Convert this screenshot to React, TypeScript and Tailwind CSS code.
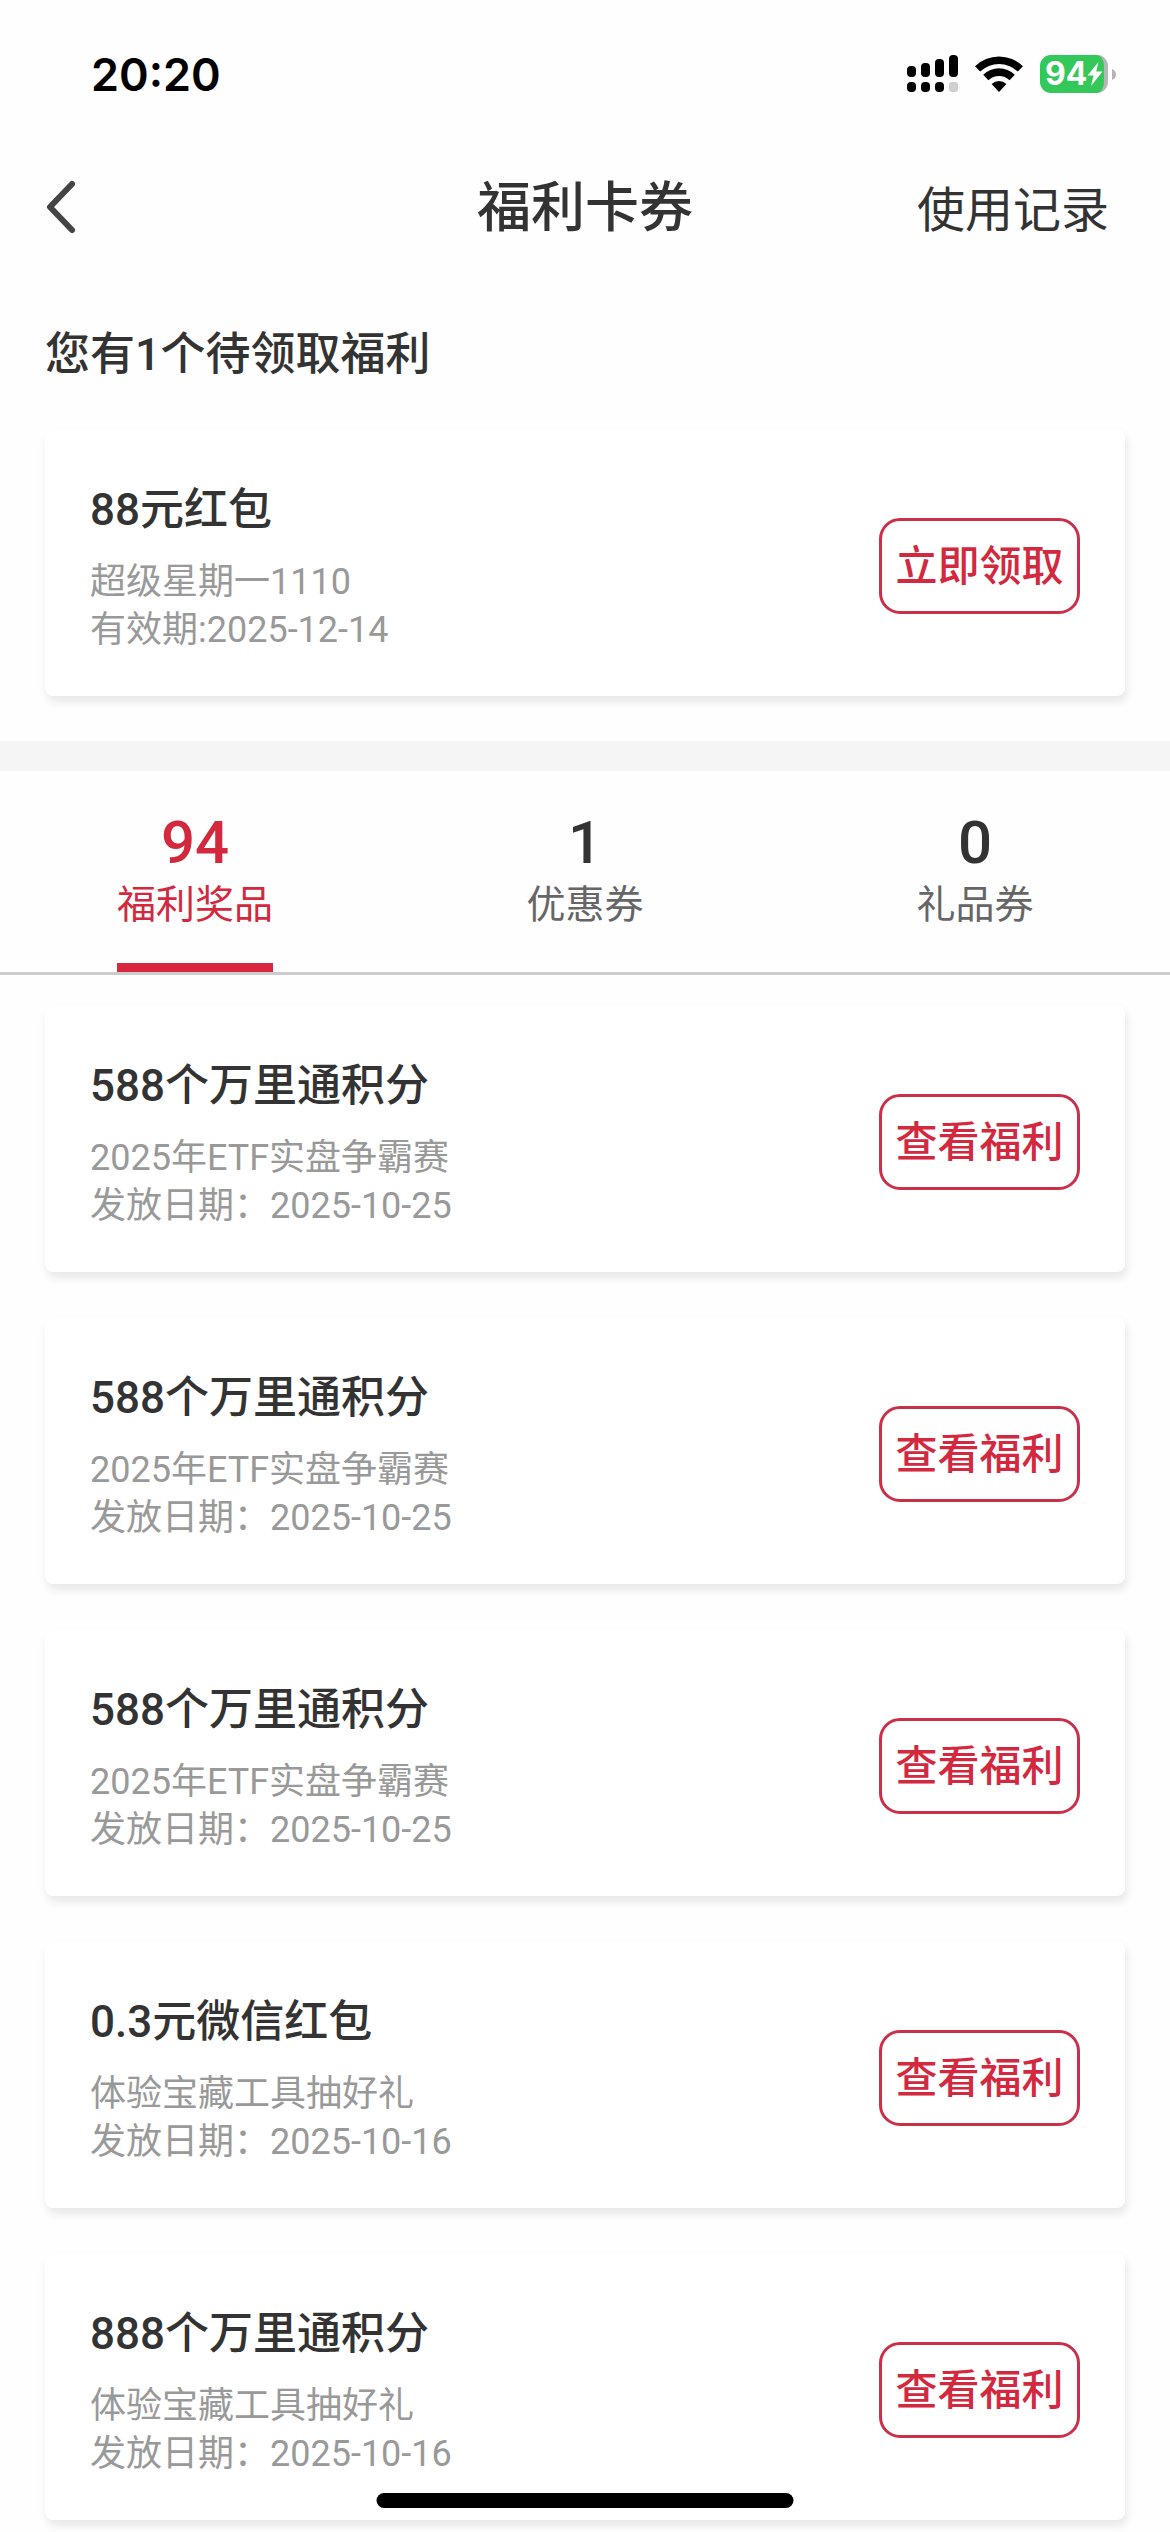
import { useState } from "react";

type Benefit = { title: string; source: string; date: string };

const pending: Benefit = {
  title: "88元红包",
  source: "超级星期一1110",
  date: "有效期:2025-12-14",
};

const tabs = [
  { count: 94, label: "福利奖品" },
  { count: 1, label: "优惠券" },
  { count: 0, label: "礼品券" },
];

const benefits: Benefit[] = [
  { title: "588个万里通积分", source: "2025年ETF实盘争霸赛", date: "发放日期：2025-10-25" },
  { title: "588个万里通积分", source: "2025年ETF实盘争霸赛", date: "发放日期：2025-10-25" },
  { title: "588个万里通积分", source: "2025年ETF实盘争霸赛", date: "发放日期：2025-10-25" },
  { title: "0.3元微信红包", source: "体验宝藏工具抽好礼", date: "发放日期：2025-10-16" },
  { title: "888个万里通积分", source: "体验宝藏工具抽好礼", date: "发放日期：2025-10-16" },
];

function SignalIcon() {
  return (
    <svg width="51" height="38" viewBox="0 0 51 38" aria-hidden="true">
      <rect x="0" y="11" width="9" height="11" rx="4" />
      <rect x="14" y="8" width="9" height="14" rx="4" />
      <rect x="28" y="4" width="9" height="18" rx="4" />
      <rect x="42" y="0" width="9" height="22" rx="4" />
      <rect x="0" y="27" width="9" height="10" rx="4" />
      <rect x="14" y="27" width="9" height="10" rx="4" />
      <rect x="28" y="27" width="9" height="10" rx="4" />
      <rect x="42" y="27" width="9" height="10" rx="3" fill="#cfcfcf" />
    </svg>
  );
}

function WifiIcon() {
  return (
    <svg width="50" height="37" viewBox="0 0 50 37" aria-hidden="true">
      <path d="M1 10.2 A34.5 34.5 0 0 1 49 10.2 L43.8 15.6 A27 27 0 0 0 6.2 15.6 Z" />
      <path d="M9.2 18.8 A22.6 22.6 0 0 1 40.8 18.8 L35.6 24.2 A15.2 15.2 0 0 0 14.4 24.2 Z" />
      <path d="M17.6 28 A10.8 10.8 0 0 1 32.4 28 L25 36 Z" />
    </svg>
  );
}

function Battery() {
  return (
    <div className="flex items-center gap-1">
      <div className="flex h-[38px] w-[68px] items-center overflow-hidden rounded-[11px] border-r-4 border-[#b4b8b4] bg-[#34c759] pl-[5px]">
        <span className="font-[Inter] text-[32px] leading-none font-bold text-white">94</span>
        <svg width="16" height="24" viewBox="0 0 16 24" fill="#fff" className="shrink-0" aria-hidden="true">
          <path d="M11.5 0 L0.5 13.5 H6.6 L4 24 L15.5 9.6 H9.2 Z" />
        </svg>
      </div>
      <svg width="4" height="11" viewBox="0 0 4 11" fill="#b4b4b4" aria-hidden="true">
        <path d="M0 0 Q4 1.5 4 5.5 Q4 9.5 0 11 Z" />
      </svg>
    </div>
  );
}

function BenefitCard({ item, action }: { item: Benefit; action: string }) {
  return (
    <article className="flex justify-between rounded-lg bg-white px-[45px] pt-[45px] pb-[42px] shadow-[2px_6px_10px_rgba(0,0,0,0.09)]">
      <div>
        <h3 className="mb-3 text-[44px] leading-[72px] font-medium text-[#333]">{item.title}</h3>
        <p className="text-[36px] leading-[48px] text-[#999]">{item.source}</p>
        <p className="text-[36px] leading-[48px] text-[#999]">{item.date}</p>
      </div>
      <button
        type="button"
        className="mt-11 h-24 w-[201px] shrink-0 self-start rounded-[21px] border-3 border-[#c9304a] pt-0.5 text-[42px] leading-none font-medium text-[#d3293f]"
      >
        {action}
      </button>
    </article>
  );
}

export default function App() {
  const [active, setActive] = useState(0);

  return (
    <div className="min-h-screen bg-[#fefefe] font-[Roboto,'Noto_Sans_CJK_SC',sans-serif] text-[#333]" lang="zh-CN">
      <div className="flex h-36 items-center justify-between pt-1 pr-[54px] pl-[91px] text-black">
        <time className="font-[Inter] text-[45px] leading-none font-semibold">20:20</time>
        <div className="flex items-center gap-4">
          <SignalIcon />
          <WifiIcon />
          <Battery />
        </div>
      </div>

      <header className="grid h-[126px] grid-cols-[1fr_auto_1fr] items-center px-[45px]">
        <button type="button" aria-label="返回" className="justify-self-start">
          <svg width="32" height="56" viewBox="0 0 32 56" fill="none" stroke="#444" strokeWidth="6" strokeLinecap="round" strokeLinejoin="round" aria-hidden="true">
            <path d="M27 5 L5 28 L27 51" />
          </svg>
        </button>
        <h1 className="pt-1 text-[54px] leading-none font-medium">福利卡券</h1>
        <a href="#records" className="justify-self-end pt-2 pr-4 text-[48px] leading-none">
          使用记录
        </a>
      </header>

      <section className="px-[45px] pb-[45px]">
        <h2 className="pt-[51px] pb-[41px] text-[45px] leading-[67px] font-medium">您有1个待领取福利</h2>
        <BenefitCard item={pending} action="立即领取" />
      </section>

      <div className="h-[30px] bg-[#f5f5f5]" />

      <div role="tablist" className="grid grid-cols-3 border-b-3 border-[#ccc]">
        {tabs.map((tab, i) => {
          const selected = i === active;
          return (
            <button
              key={tab.label}
              type="button"
              role="tab"
              aria-selected={selected}
              onClick={() => setActive(i)}
              className={
                selected
                  ? "flex flex-col items-center pt-10 text-[#d3293f]"
                  : "flex flex-col items-center pt-10 text-[#333]"
              }
            >
              <span className="text-[60px] leading-[64px] font-medium">{tab.count}</span>
              <span className={selected ? "text-[39px] leading-[60px]" : "text-[39px] leading-[60px] text-[#666]"}>
                {tab.label}
              </span>
              <span className={selected ? "mt-7 h-[9px] w-[156px] bg-[#d7263d]" : "mt-7 h-[9px] w-[156px]"} />
            </button>
          );
        })}
      </div>

      <main className="flex flex-col gap-[45px] px-[45px] pt-[30px] pb-3">
        {benefits.map((item, i) => (
          <BenefitCard key={i} item={item} action="查看福利" />
        ))}
      </main>

      <div className="fixed bottom-6 left-1/2 h-[15px] w-[417px] -translate-x-1/2 rounded-full bg-black" />
    </div>
  );
}
